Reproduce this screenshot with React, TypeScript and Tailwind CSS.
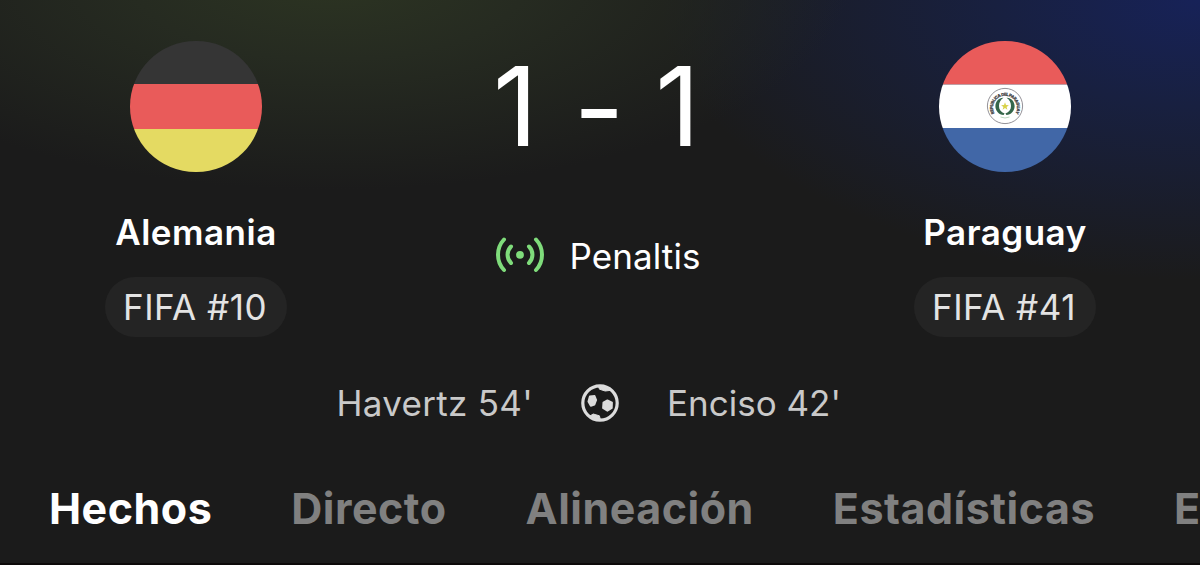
import type { ReactNode } from "react";
import clsx from "clsx";

const tabs = [
  { label: "Hechos", active: true },
  { label: "Directo" },
  { label: "Alineación" },
  { label: "Estadísticas" },
  { label: "E" },
];

function GermanyFlag() {
  return (
    <div className="flex h-[131px] w-[132px] flex-col overflow-hidden rounded-full">
      <div className="h-[43px] bg-[#353535]" />
      <div className="h-[45px] bg-[#e95b5a]" />
      <div className="h-[43px] bg-[#e4da62]" />
    </div>
  );
}

function ParaguayFlag() {
  return (
    <svg viewBox="0 0 132 131" className="h-[131px] w-[132px] rounded-full">
      <rect width="132" height="43.5" fill="#e95b5a" />
      <rect y="43.5" width="132" height="43.5" fill="#ffffff" />
      <rect y="87" width="132" height="45" fill="#4167a7" />
      <circle cx="66" cy="65" r="17.6" fill="#fff" stroke="#77757c" strokeWidth="0.8" />
      <defs>
        <path id="seal" d="M55.6 72.4 A 11.9 11.9 0 1 1 76.4 72.4" />
      </defs>
      <text
        fontSize="4.2"
        fontWeight="800"
        fill="#3c3c40"
        stroke="#3c3c40"
        strokeWidth="0.2"
        fontFamily="Inter, sans-serif"
      >
        <textPath href="#seal" textLength="49" startOffset="0">
          REPUBLICA DEL PARAGUAY
        </textPath>
      </text>
      <path
        d="M64.5 56.8 C60 56.5 56.4 60.5 56.4 65.3 C56.4 70 60 73.9 64.6 74.1 L65.6 72.5 C61.8 71.3 60 68.5 60 65 C60 61.5 61.6 58.5 64.5 56.8 Z"
        fill="#35664a"
      />
      <path
        d="M67.5 56.8 C72 56.5 75.6 60.5 75.6 65.3 C75.6 70 72 73.9 67.4 74.1 L66.4 72.5 C70.2 71.3 72 68.5 72 65 C72 61.5 70.4 58.5 67.5 56.8 Z"
        fill="#35664a"
      />
      <path
        d="M66 61.3 L67 64.1 L69.9 64.2 L67.6 65.9 L68.4 68.7 L66 67.1 L63.6 68.7 L64.4 65.9 L62.1 64.2 L65 64.1 Z"
        fill="#d9d24a"
      />
      <path d="M61.5 76 Q66 78 70.5 76" fill="none" stroke="#a9cdb0" strokeWidth="0.8" />
    </svg>
  );
}

function LiveIcon() {
  return (
    <svg
      viewBox="0 0 50 36"
      className="h-9 w-[50px]"
      fill="none"
      stroke="#7fdc7b"
      strokeWidth="4"
      strokeLinecap="round"
    >
      <path d="M9 2.5 C1 11 1 24.5 9 33" />
      <path d="M16 9.5 C11.4 14 11.4 21.5 16 26" />
      <path d="M34 9.5 C38.6 14 38.6 21.5 34 26" />
      <path d="M41 2.5 C49 11 49 24.5 41 33" />
      <circle cx="25" cy="17.8" r="3.9" fill="#7fdc7b" stroke="none" />
    </svg>
  );
}

function BallIcon() {
  return (
    <svg
      viewBox="0 0 38 38"
      className="size-[38px]"
      fill="#dcdcdc"
      stroke="#dcdcdc"
      strokeLinejoin="round"
    >
      <circle cx="19" cy="19" r="17.2" fill="none" strokeWidth="3.2" />
      <path d="M17.5 2.5 L18.5 5.2 L24.2 7 L29.2 6.4 L27 3.5 Z" strokeWidth="1" />
      <path d="M8.8 12.4 L13.6 12 L15.2 16 L13.4 20.6 L9.8 21.8 L7.4 17.6 Z" strokeWidth="1.8" />
      <path d="M26.4 16.4 L31 18.6 L30.8 24 L26.4 26.8 L22 24 L22.4 18.6 Z" strokeWidth="1.8" />
      <path d="M9 32 L12.2 30 L18.4 31.8 L19.4 35.6 L13 35.4 Z" strokeWidth="1" />
    </svg>
  );
}

function Team({ flag, name, rank }: { flag: ReactNode; name: string; rank: string }) {
  return (
    <div className="flex flex-col items-center pt-[41px]">
      {flag}
      <p className="mt-10 text-[35px] leading-10 font-semibold tracking-[0.5px] text-white">
        {name}
      </p>
      <p className="mt-[25px] flex h-[60px] w-[182px] items-center justify-center rounded-full bg-[#242424] pr-0.5 text-[35px] font-normal tracking-[0.5px] text-[#e3e3e3]">
        {rank}
      </p>
    </div>
  );
}

export default function App() {
  return (
    <main className="flex h-[565px] w-[1200px] flex-col overflow-hidden border-b-2 border-[#0d0a0a] bg-[#1b1b1b] bg-[radial-gradient(ellipse_520px_210px_at_330px_-20px,#2c3422_0%,#262b21_38%,transparent_100%),radial-gradient(ellipse_540px_280px_at_1200px_0px,#172258_0%,#182040_38%,transparent_100%)] font-['Inter',sans-serif]">
      <section className="grid h-[337px] shrink-0 grid-cols-[392px_1fr_390px]">
        <Team flag={<GermanyFlag />} name="Alemania" rank="FIFA #10" />

        <div className="flex flex-col items-center pt-[51px] pr-1.5">
          <p className="pr-[3px] text-[110px] leading-[110px] whitespace-nowrap text-white">
            1 <span className="relative top-[7px] ml-[5px]">-</span> 1
          </p>
          <div className="mt-[74px] flex items-center gap-6">
            <LiveIcon />
            <span className="relative top-px text-[35px] leading-10 tracking-[0.1px] text-white">Penaltis</span>
          </div>
        </div>

        <Team flag={<ParaguayFlag />} name="Paraguay" rank="FIFA #41" />
      </section>

      <section className="mt-[46px] grid shrink-0 grid-cols-[1fr_38px_1fr] items-center gap-12 text-[35px] leading-10 text-[#c9c9c9]">
        <p className="text-right tracking-[0.3px]">Havertz 54'</p>
        <BallIcon />
        <p>Enciso 42'</p>
      </section>

      <nav className="mt-[60px] flex shrink-0 gap-[79px] pl-[49px] text-[43px] leading-[50px] font-bold tracking-[0.5px]">
        {tabs.map((tab) => (
          <button
            key={tab.label}
            type="button"
            className={clsx("shrink-0", tab.active ? "text-white" : "text-[#808080]")}
          >
            {tab.label}
          </button>
        ))}
      </nav>
    </main>
  );
}
